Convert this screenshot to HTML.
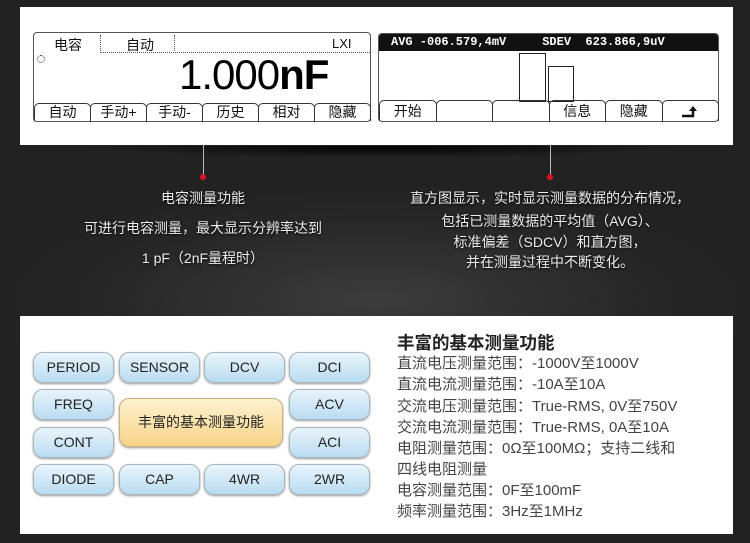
<!DOCTYPE html>
<html><head><meta charset="utf-8"><style>
*{margin:0;padding:0;box-sizing:border-box}
body{width:750px;height:543px;overflow:hidden;background:#2a2a2a;position:relative;font-family:"Liberation Sans","Noto Sans CJK SC",sans-serif}
.bg{position:absolute;inset:0;background:radial-gradient(ellipse 400px 120px at 375px 300px,#3c3c3c,#262626 70%,#222 100%)}
.panel{position:absolute;background:#fff}
.abs{position:absolute}
.disp{position:absolute;border:1px solid #555;border-radius:4px}
.tabs{position:absolute;left:0;right:0;bottom:0;height:18px;display:flex}
.tabs div{flex:1;border:1px solid #333;border-bottom:none;border-radius:5px 5px 0 0;font-size:14px;line-height:17px;text-align:center;color:#111;margin-right:-1px}
.t{position:absolute;color:#eee;font-size:14px;text-align:center;white-space:nowrap;text-shadow:0 1px 2px #000}
.line{position:absolute;width:1px;background:#bbb}
.dot{position:absolute;width:6px;height:6px;border-radius:50%;background:#e0102a}
.b{position:absolute;width:81px;height:31px;border-radius:10px;border:1px solid #aab4bd;background:linear-gradient(#e9f4fb,#b9dcf1);box-shadow:0 1px 2px #999;font-size:14px;color:#222;text-align:center;line-height:29px}
.r{position:absolute;left:397px;font-size:15px;color:#444;white-space:nowrap}
</style></head><body>
<div class="bg"></div>
<div class="panel" style="left:20px;top:7px;width:713px;height:138px"></div>
<div class="abs" style="left:70px;top:146px;width:620px;height:12px;background:radial-gradient(ellipse at center top,#000,transparent 70%)"></div>

<div class="disp" style="left:33px;top:32px;width:338px;height:90px;">
 <div class="abs" style="left:20px;top:2px;font-size:14px;color:#111">电容</div>
 <div class="abs" style="left:66px;top:2px;width:1px;height:16px;border-left:1px dotted #555"></div>
 <div class="abs" style="left:92px;top:2px;font-size:14px;color:#111">自动</div>
 <div class="abs" style="left:140px;top:2px;width:1px;height:16px;border-left:1px dotted #555"></div>
 <div class="abs" style="left:298px;top:3px;font-size:13px;color:#111">LXI</div>
 <div class="abs" style="left:66px;top:19px;width:270px;border-top:1px dotted #555"></div>
 <div class="abs" style="left:3px;top:22px;width:8px;height:8px;border:1px dotted #333;border-radius:50%"></div>
 <div class="abs" style="left:145px;top:20px;font-size:42px;line-height:44px;color:#000;letter-spacing:-1px">1.000<b>nF</b></div>
 <div class="tabs"><div>自动</div><div>手动+</div><div>手动-</div><div>历史</div><div>相对</div><div>隐藏</div></div>
</div>

<div class="disp" style="left:378px;top:33px;width:341px;height:89px;">
 <div class="abs" style="left:0;top:0;right:0;height:17px;background:#111;border-radius:3px 3px 0 0;color:#fff;font-family:'Liberation Mono',monospace;font-weight:bold;font-size:12px;line-height:17px;white-space:pre;padding-left:12px">AVG -006.579,4mV     SDEV  623.866,9uV</div>
 <div class="abs" style="left:140px;top:19px;width:27px;height:49px;border:1px solid #222"></div>
 <div class="abs" style="left:169px;top:32px;width:26px;height:36px;border:1px solid #222"></div>
 <div class="tabs" style="height:21px"><div style="line-height:20px">开始</div><div></div><div></div><div style="line-height:20px">信息</div><div style="line-height:20px">隐藏</div><div><svg width="20" height="14" viewBox="0 0 20 14" style="margin-top:4px"><path d="M2 11H13V5" fill="none" stroke="#111" stroke-width="2.5"/><path d="M9 6L13 1L17 6Z" fill="#111"/></svg></div></div>
</div>

<div class="line" style="left:203px;top:145px;height:32px"></div>
<div class="dot" style="left:200px;top:174px"></div>
<div class="line" style="left:550px;top:145px;height:32px"></div>
<div class="dot" style="left:547px;top:174px"></div>

<div class="t" style="left:103px;width:200px;top:188px">电容测量功能</div>
<div class="t" style="left:53px;width:300px;top:218px">可进行电容测量，最大显示分辨率达到</div>
<div class="t" style="left:103px;width:200px;top:248px">1 pF（2nF量程时）</div>
<div class="t" style="left:380px;width:340px;top:188px">直方图显示，实时显示测量数据的分布情况，</div>
<div class="t" style="left:380px;width:340px;top:211px">包括已测量数据的平均值（AVG）、</div>
<div class="t" style="left:380px;width:340px;top:232px">标准偏差（SDCV）和直方图，</div>
<div class="t" style="left:380px;width:340px;top:252px">并在测量过程中不断变化。</div>

<div class="panel" style="left:20px;top:316px;width:713px;height:218px"></div>
<div class="b" style="left:33px;top:352px">PERIOD</div>
<div class="b" style="left:119px;top:352px">SENSOR</div>
<div class="b" style="left:204px;top:352px">DCV</div>
<div class="b" style="left:289px;top:352px">DCI</div>
<div class="b" style="left:33px;top:389px">FREQ</div>
<div class="b" style="left:289px;top:389px">ACV</div>
<div class="b" style="left:33px;top:427px">CONT</div>
<div class="b" style="left:289px;top:427px">ACI</div>
<div class="b" style="left:33px;top:464px">DIODE</div>
<div class="b" style="left:119px;top:464px">CAP</div>
<div class="b" style="left:204px;top:464px">4WR</div>
<div class="b" style="left:289px;top:464px">2WR</div>
<div class="b" style="left:119px;top:398px;width:164px;height:49px;line-height:47px;background:linear-gradient(#fdf1cf,#f8d488);border-color:#c8b37f">丰富的基本测量功能</div>

<div class="r" style="top:330px;font-size:17.5px;color:#222;font-weight:bold">丰富的基本测量功能</div>
<div class="r" style="top:352px">直流电压测量范围：-1000V至1000V</div>
<div class="r" style="top:373px">直流电流测量范围：-10A至10A</div>
<div class="r" style="top:395px">交流电压测量范围：True-RMS, 0V至750V</div>
<div class="r" style="top:416px">交流电流测量范围：True-RMS, 0A至10A</div>
<div class="r" style="top:437px">电阻测量范围：0Ω至100MΩ；支持二线和</div>
<div class="r" style="top:458px">四线电阻测量</div>
<div class="r" style="top:479px">电容测量范围：0F至100mF</div>
<div class="r" style="top:500px">频率测量范围：3Hz至1MHz</div>
</body></html>
